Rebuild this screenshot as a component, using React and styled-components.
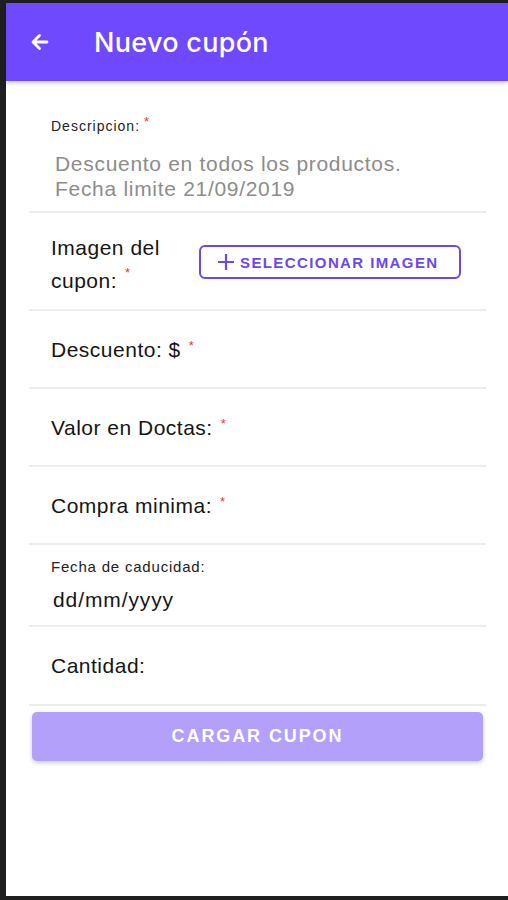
import React from 'react';
import styled, { createGlobalStyle } from 'styled-components';

const GlobalStyle = createGlobalStyle`
  html, body {
    margin: 0;
    padding: 0;
    background: #1f1f1f;
  }
  * {
    box-sizing: border-box;
  }
`;

const Frame = styled.div`
  width: 508px;
  height: 900px;
  padding: 3px 0 4px 6px;
  background: #1f1f1f;
  display: flex;
  flex-direction: column;
`;

const Screen = styled.div`
  flex: 1;
  background: #fff;
  display: flex;
  flex-direction: column;
  font-family: "Liberation Sans", Arial, sans-serif;
  color: #111;
`;

const Header = styled.header`
  height: 78px;
  background: #6e49fe;
  display: flex;
  align-items: center;
  padding-left: 19px;
  gap: 39px;
  box-shadow: 0 2px 4px rgba(0, 0, 0, 0.22);
  position: relative;
  z-index: 1;
`;

const BackButton = styled.button`
  border: 0;
  background: none;
  padding: 0;
  width: 30px;
  height: 30px;
  display: flex;
  align-items: center;
  justify-content: center;
  cursor: pointer;
`;

const Title = styled.h1`
  margin: 0;
  font-family: Inter, "Liberation Sans", sans-serif;
  font-weight: 500;
  font-size: 27px;
  letter-spacing: 0.3px;
  color: #fff;
`;

const Form = styled.form`
  display: flex;
  flex-direction: column;
`;

const Field = styled.div`
  margin: 0 22px 0 23px;
  padding-left: 22px;
  border-bottom: 2px solid #ececec;
  display: flex;
  flex-direction: ${({ $stack }) => ($stack ? 'column' : 'row')};
  align-items: ${({ $stack }) => ($stack ? 'stretch' : 'center')};
  height: ${({ $h }) => ($h ? `${$h}px` : 'auto')};
`;

const DescField = styled(Field)`
  padding-top: 37px;
  padding-bottom: 10px;
`;

const DateField = styled(Field)`
  padding-top: 13px;
  padding-bottom: 13px;
`;

const ImageField = styled(Field)`
  padding-top: 18px;
  padding-bottom: 12px;
  gap: 8px;
`;

const SmallLabel = styled.label`
  font-size: 14px;
  line-height: 16px;
  letter-spacing: 1px;
  color: #222;
`;

const DateLabel = styled(SmallLabel)`
  font-size: 15px;
  line-height: 18px;
  letter-spacing: 0.8px;
`;

const Label = styled.label`
  font-size: 21px;
  line-height: ${({ $lh }) => ($lh ? `${$lh}px` : '25px')};
  letter-spacing: 0.5px;
  color: #151515;
  width: ${({ $w }) => ($w ? `${$w}px` : 'auto')};
  flex-shrink: 0;
`;

const Req = styled.span`
  display: inline-block;
  color: #e53935;
  font-size: 13px;
  line-height: 13px;
  vertical-align: top;
  margin-left: ${({ $small }) => ($small ? '4px' : '8px')};
  position: relative;
  top: ${({ $small }) => ($small ? '-3px' : '2px')};
`;

const Placeholder = styled.div`
  margin-top: 17px;
  padding-left: 4px;
  font-size: 21px;
  line-height: 25px;
  letter-spacing: 0.7px;
  color: #8c8c8c;
`;

const DateValue = styled.div`
  margin-top: 11px;
  padding-left: 2px;
  font-size: 21px;
  line-height: 25px;
  letter-spacing: 0.9px;
  color: #151515;
`;

const OutlineButton = styled.button`
  width: 262px;
  height: 34px;
  margin-bottom: 4px;
  border: 2px solid #6a47f2;
  border-radius: 6px;
  background: #fff;
  display: flex;
  align-items: center;
  gap: 5px;
  padding: 0 0 0 16px;
  font-family: "Liberation Sans", Arial, sans-serif;
  font-weight: 700;
  font-size: 15px;
  letter-spacing: 1.4px;
  color: #6a47f2;
  cursor: pointer;
`;

const SubmitButton = styled.button`
  margin: 6px 25px 0 26px;
  height: 49px;
  border: 0;
  border-radius: 5px;
  background: #b2a0fb;
  box-shadow: 0 2px 4px rgba(0, 0, 0, 0.2);
  font-family: "Liberation Sans", Arial, sans-serif;
  font-weight: 700;
  font-size: 18px;
  letter-spacing: 1.9px;
  color: #fff;
  cursor: pointer;
`;

const ArrowBack = () => (
  <svg width="24" height="24" viewBox="0 0 24 24" fill="none" stroke="#fff" strokeWidth="2.8" strokeLinecap="round" strokeLinejoin="round">
    <path d="M19 12H5.5M11.5 5.5L5 12l6.5 6.5" />
  </svg>
);

const Plus = () => (
  <svg width="18" height="18" viewBox="0 0 18 18" stroke="#6a47f2" strokeWidth="2.2" fill="none">
    <path d="M9 1v16M1 9h16" />
  </svg>
);

const simpleFields = [
  { label: 'Descuento: $', required: true },
  { label: 'Valor en Doctas:', required: true },
  { label: 'Compra minima:', required: true },
];

const App = () => {
  return (
    <>
      <GlobalStyle />
      <Frame>
        <Screen>
          <Header>
            <BackButton type="button">
              <ArrowBack />
            </BackButton>
            <Title>Nuevo cupón</Title>
          </Header>

          <Form onSubmit={(e) => e.preventDefault()}>
            <DescField $stack>
              <SmallLabel>
                Descripcion:<Req $small>*</Req>
              </SmallLabel>
              <Placeholder>
                Descuento en todos los productos.
                <br />
                Fecha limite 21/09/2019
              </Placeholder>
            </DescField>

            <ImageField>
              <Label $w={140} $lh={33}>
                Imagen del cupon:<Req>*</Req>
              </Label>
              <OutlineButton type="button">
                <Plus />
                SELECCIONAR IMAGEN
              </OutlineButton>
            </ImageField>

            {simpleFields.map((f) => (
              <Field key={f.label} $h={78}>
                <Label>
                  {f.label}
                  {f.required && <Req>*</Req>}
                </Label>
              </Field>
            ))}

            <DateField $stack>
              <DateLabel>Fecha de caducidad:</DateLabel>
              <DateValue>dd/mm/yyyy</DateValue>
            </DateField>

            <Field $h={79}>
              <Label>Cantidad:</Label>
            </Field>

            <SubmitButton type="submit">CARGAR CUPON</SubmitButton>
          </Form>
        </Screen>
      </Frame>
    </>
  );
};

export default App;
